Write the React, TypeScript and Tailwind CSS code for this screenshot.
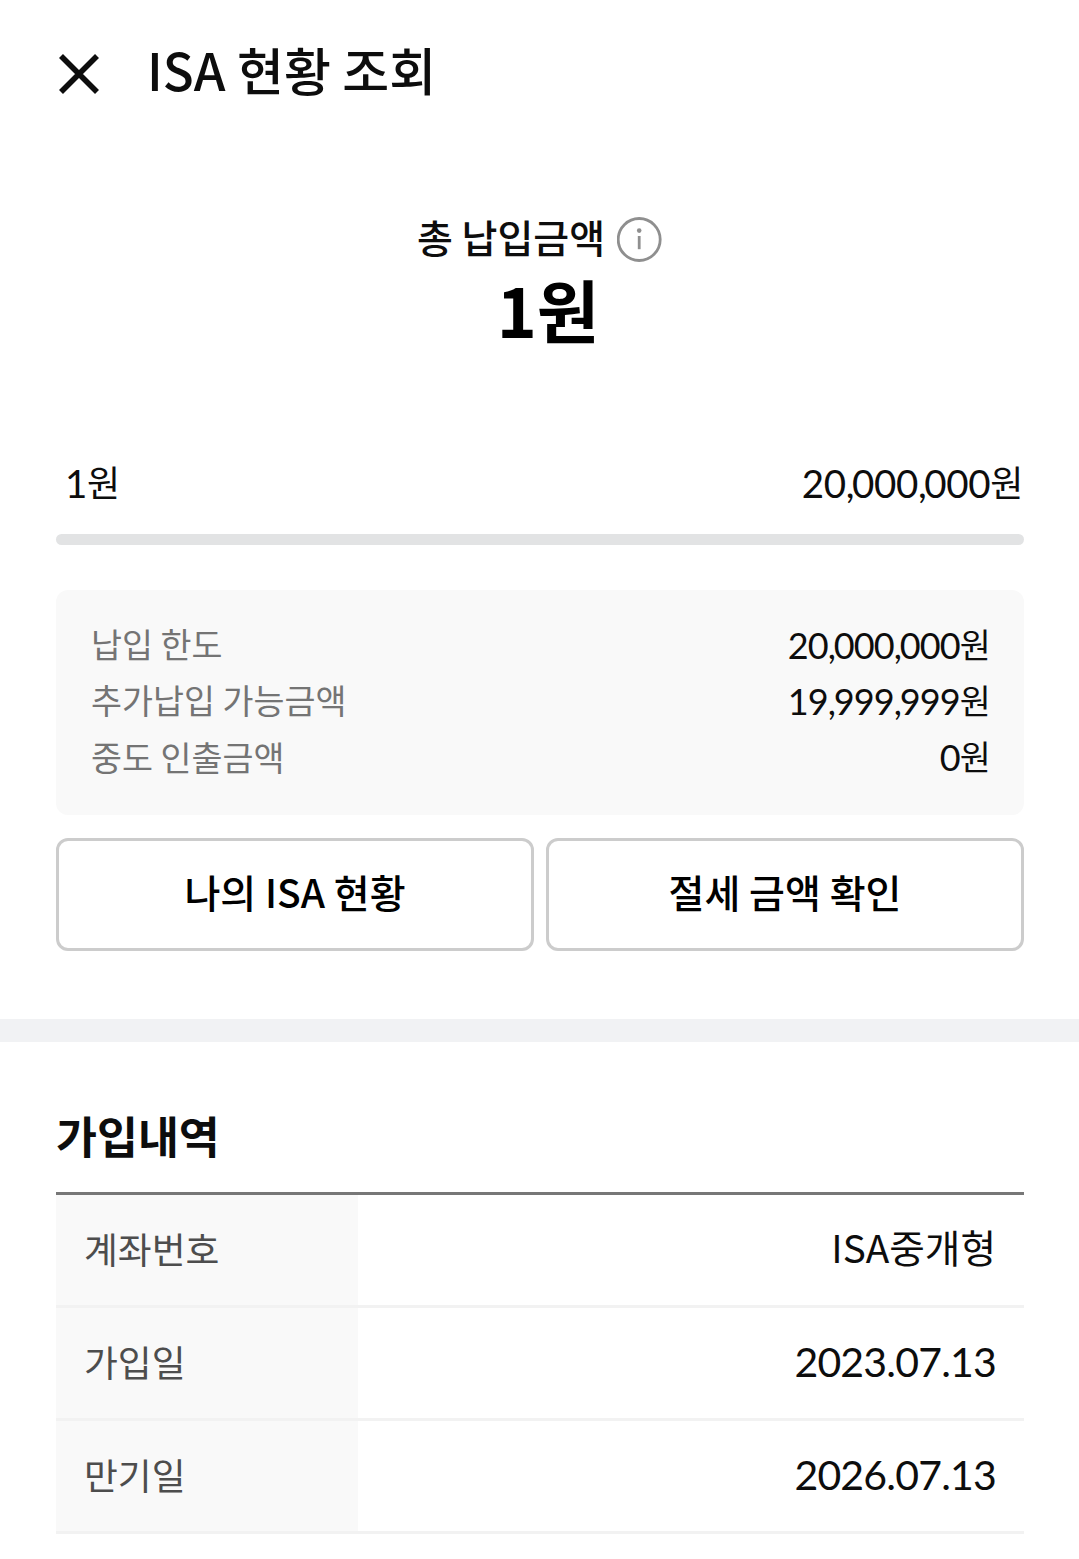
/* ---------- TYPES ---------- */
type Row = {
  label: string;
  value: string;
  digits?: boolean;
};

/* ---------- DATA ---------- */
const limits: Row[] = [
  { label: "납입 한도", value: "20,000,000" },
  { label: "추가납입 가능금액", value: "19,999,999" },
  { label: "중도 인출금액", value: "0" },
];

const details: Row[] = [
  { label: "계좌번호", value: "ISA중개형" },
  { label: "가입일", value: "2023.07.13", digits: true },
  { label: "만기일", value: "2026.07.13", digits: true },
];

/* ---------- AMOUNT (tighter commas) ---------- */
function Amount({ value }: { value: string }) {
  return (
    <span>
      <span className="font-['Lato'] text-[1.07em]">
        {value.split(/(,)/).map((part, i) =>
          part === "," ? <span key={i} className="tracking-[-0.065em]">,</span> : part
        )}
      </span>
      <span className="align-[1px]">원</span>
    </span>
  );
}

export default function App() {
  return (
    <main className="h-[1559px] w-[1079px] overflow-hidden bg-white font-['Noto_Sans_CJK_KR',sans-serif] text-[#0d0d0d] whitespace-nowrap">

      {/* HEADER */}
      <header className="flex h-[148px] items-center px-[59px]">
        <button aria-label="닫기">
          <svg viewBox="0 0 40 40" className="h-10 w-10" fill="none" stroke="#0d0d0d" strokeWidth="5.6">
            <path d="M2 2l36 36M38 2L2 38" />
          </svg>
        </button>
        <h1 className="ml-[48px] pb-[10px] text-[51px] leading-[60px] font-medium">ISA 현황 조회</h1>
      </header>

      {/* TOTAL */}
      <section className="flex h-[296px] flex-col items-center pt-[60px]">
        <div className="flex h-[56px] items-center gap-3 pl-px">
          <span className="text-[39px] leading-[56px] font-medium">총 납입금액</span>
          <svg viewBox="0 0 46 46" className="mt-[8px] h-[46px] w-[46px]" fill="none" stroke="#8f8f8f" strokeWidth="2.8">
            <circle cx="22.2" cy="22.5" r="21" />
            <path d="M22.2 19v13.2" />
            <circle cx="22.2" cy="13.6" r="2.3" fill="#8f8f8f" stroke="none" />
          </svg>
        </div>
        <p className="-mt-px ml-[17px] text-[68px] leading-[92px] font-bold text-black">1원</p>
      </section>

      {/* PROGRESS */}
      <section className="pr-[55px] pl-[56px]">
        <div className="flex h-[90px] justify-between pt-[7px] pr-px pl-[9px] text-[36px] leading-[60px] tracking-[-0.35px]">
          <Amount value="1" />
          <Amount value="20,000,000" />
        </div>
        <div className="h-[11px] rounded-full bg-[#e2e3e4]" />
      </section>

      {/* LIMITS */}
      <section className="mt-[45px] mr-[55px] ml-[56px] h-[225px] rounded-[12px] bg-[#f9f9f9] pt-[26px] pr-[34px] pl-[35px]">
        {limits.map((item) => (
          <div key={item.label} className="flex h-[56.3px] items-center justify-between text-[33.7px] leading-[56px]">
            <span className="text-[#747474]">{item.label}</span>
            <span className="tracking-[-0.85px]"><Amount value={item.value} /></span>
          </div>
        ))}
      </section>

      {/* BUTTONS */}
      <div className="mt-[23px] mr-[55px] ml-[56px] grid grid-cols-2 gap-3 text-[39px] font-medium text-black">
        <button className="h-[113px] rounded-[12px] border-3 border-[#ccc] pb-[6px]">나의 ISA 현황</button>
        <button className="h-[113px] rounded-[12px] border-3 border-[#ccc] pb-[6px]">절세 금액 확인</button>
      </div>

      <div className="mt-[68px] h-[23px] bg-[#f1f2f4]" />

      {/* DETAILS */}
      <section className="pt-[59px] pr-[55px] pl-[56px]">
        <h2 className="h-[91px] text-[44.5px] leading-[68px] font-bold">가입내역</h2>
        <dl className="border-t-3 border-[#777]">
          {details.map((item) => (
            <div key={item.label} className="flex h-[113px] border-b-3 border-[#f2f2f2]">
              <dt className="w-[302px] bg-[#f9f9f9] pl-[28px] text-[36.8px] leading-[106px] text-[#4d4d4d]">{item.label}</dt>
              {item.digits ? (
                <dd className="flex-1 pr-[28px] text-right font-['Lato'] text-[41px] leading-[108px] tracking-[-0.8px]">
                  {item.value}
                </dd>
              ) : (
                <dd className="flex-1 pr-[28px] text-right text-[38.7px] leading-[103px]">{item.value}</dd>
              )}
            </div>
          ))}
        </dl>
      </section>
    </main>
  );
}
